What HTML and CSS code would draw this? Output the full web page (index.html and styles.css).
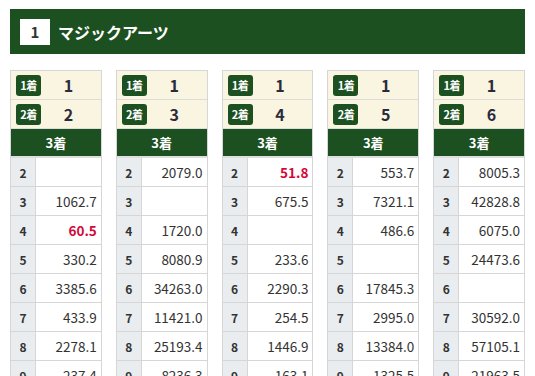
FILE: index.html
```html
<!DOCTYPE html>
<html lang="ja">
<head>
<meta charset="utf-8">
<link rel="stylesheet" href="styles.css">
</head>
<body>
<div class="page">
  <div class="head"><span class="num">1</span><span class="title">マジックアーツ</span></div>
  <div class="grid">
    <div class="col">
      <div class="pick"><span class="badge">1着</span><span class="pn">1</span></div>
      <div class="pick"><span class="badge">2着</span><span class="pn">2</span></div>
      <div class="third">3着</div>
      <div class="rows">
        <div class="r"><span class="k">2</span><span class="v"></span></div>
        <div class="r"><span class="k">3</span><span class="v">1062.7</span></div>
        <div class="r"><span class="k">4</span><span class="v hot">60.5</span></div>
        <div class="r"><span class="k">5</span><span class="v">330.2</span></div>
        <div class="r"><span class="k">6</span><span class="v">3385.6</span></div>
        <div class="r"><span class="k">7</span><span class="v">433.9</span></div>
        <div class="r"><span class="k">8</span><span class="v">2278.1</span></div>
        <div class="r"><span class="k">9</span><span class="v">237.4</span></div>
      </div>
    </div>
    <div class="col">
      <div class="pick"><span class="badge">1着</span><span class="pn">1</span></div>
      <div class="pick"><span class="badge">2着</span><span class="pn">3</span></div>
      <div class="third">3着</div>
      <div class="rows">
        <div class="r"><span class="k">2</span><span class="v">2079.0</span></div>
        <div class="r"><span class="k">3</span><span class="v"></span></div>
        <div class="r"><span class="k">4</span><span class="v">1720.0</span></div>
        <div class="r"><span class="k">5</span><span class="v">8080.9</span></div>
        <div class="r"><span class="k">6</span><span class="v">34263.0</span></div>
        <div class="r"><span class="k">7</span><span class="v">11421.0</span></div>
        <div class="r"><span class="k">8</span><span class="v">25193.4</span></div>
        <div class="r"><span class="k">9</span><span class="v">8236.3</span></div>
      </div>
    </div>
    <div class="col">
      <div class="pick"><span class="badge">1着</span><span class="pn">1</span></div>
      <div class="pick"><span class="badge">2着</span><span class="pn">4</span></div>
      <div class="third">3着</div>
      <div class="rows">
        <div class="r"><span class="k">2</span><span class="v hot">51.8</span></div>
        <div class="r"><span class="k">3</span><span class="v">675.5</span></div>
        <div class="r"><span class="k">4</span><span class="v"></span></div>
        <div class="r"><span class="k">5</span><span class="v">233.6</span></div>
        <div class="r"><span class="k">6</span><span class="v">2290.3</span></div>
        <div class="r"><span class="k">7</span><span class="v">254.5</span></div>
        <div class="r"><span class="k">8</span><span class="v">1446.9</span></div>
        <div class="r"><span class="k">9</span><span class="v">163.1</span></div>
      </div>
    </div>
    <div class="col">
      <div class="pick"><span class="badge">1着</span><span class="pn">1</span></div>
      <div class="pick"><span class="badge">2着</span><span class="pn">5</span></div>
      <div class="third">3着</div>
      <div class="rows">
        <div class="r"><span class="k">2</span><span class="v">553.7</span></div>
        <div class="r"><span class="k">3</span><span class="v">7321.1</span></div>
        <div class="r"><span class="k">4</span><span class="v">486.6</span></div>
        <div class="r"><span class="k">5</span><span class="v"></span></div>
        <div class="r"><span class="k">6</span><span class="v">17845.3</span></div>
        <div class="r"><span class="k">7</span><span class="v">2995.0</span></div>
        <div class="r"><span class="k">8</span><span class="v">13384.0</span></div>
        <div class="r"><span class="k">9</span><span class="v">1325.5</span></div>
      </div>
    </div>
    <div class="col">
      <div class="pick"><span class="badge">1着</span><span class="pn">1</span></div>
      <div class="pick"><span class="badge">2着</span><span class="pn">6</span></div>
      <div class="third">3着</div>
      <div class="rows">
        <div class="r"><span class="k">2</span><span class="v">8005.3</span></div>
        <div class="r"><span class="k">3</span><span class="v">42828.8</span></div>
        <div class="r"><span class="k">4</span><span class="v">6075.0</span></div>
        <div class="r"><span class="k">5</span><span class="v">24473.6</span></div>
        <div class="r"><span class="k">6</span><span class="v"></span></div>
        <div class="r"><span class="k">7</span><span class="v">30592.0</span></div>
        <div class="r"><span class="k">8</span><span class="v">57105.1</span></div>
        <div class="r"><span class="k">9</span><span class="v">21963.5</span></div>
      </div>
    </div>
  </div>
</div>
</body>
</html>
```
FILE: styles.css
```css
html, body {
  margin: 0;
  padding: 0;
  background: #fff;
}
body {
  font-family: "Noto Sans CJK JP", "Noto Sans", sans-serif;
  color: #333;
  overflow: hidden;
  height: 376px;
}
.page {
  padding: 9px 10px 0 10px;
}
.head {
  display: flex;
  align-items: center;
  height: 45px;
  background: #1d5020;
  padding-left: 10px;
}
.num {
  width: 30px;
  height: 26px;
  background: #fff;
  color: #333;
  font-weight: 700;
  font-size: 15px;
  display: flex;
  align-items: center;
  justify-content: center;
  line-height: 1;
}
.title {
  color: #fff;
  font-weight: 700;
  font-size: 16px;
  margin-left: 8px;
  line-height: 1;
}
.grid {
  display: grid;
  grid-template-columns: repeat(5, 1fr);
  column-gap: 14px;
  margin-top: 16px;
}
.col {
  border: 1px solid #d6d6d6;
  border-bottom: none;
}
.pick {
  display: flex;
  align-items: center;
  height: 28px;
  background: #faf5e0;
  border-bottom: 1px solid #dcdcdc;
  padding-left: 5px;
}
.badge {
  width: 25px;
  height: 21px;
  border-radius: 3px;
  background: #1d5020;
  color: #fff;
  font-size: 11px;
  font-weight: 700;
  display: flex;
  align-items: center;
  justify-content: center;
  line-height: 1;
  letter-spacing: -0.5px;
}
.pn {
  flex: 1;
  text-align: center;
  font-size: 16px;
  font-weight: 700;
  color: #2b2b3c;
  line-height: 1;
  padding-right: 5px;
}
.third {
  height: 27px;
  background: #1d5020;
  color: #fff;
  font-weight: 700;
  font-size: 13px;
  display: flex;
  align-items: center;
  justify-content: center;
  line-height: 1;
}
.rows {
  border-top: 2px solid #dedede;
}
.r {
  display: flex;
  height: 28px;
  border-bottom: 1px solid #d6d6d6;
}
.k {
  width: 24px;
  flex: none;
  background: #e9edf0;
  border-right: 1px solid #d6d6d6;
  display: flex;
  align-items: center;
  justify-content: center;
  font-size: 12px;
  font-weight: 700;
  color: #333;
}
.v {
  flex: 1;
  display: flex;
  align-items: center;
  justify-content: flex-end;
  padding-right: 4px;
  font-size: 13.5px;
  color: #333;
}
.v.hot {
  color: #d4083a;
  font-weight: 700;
}
```
